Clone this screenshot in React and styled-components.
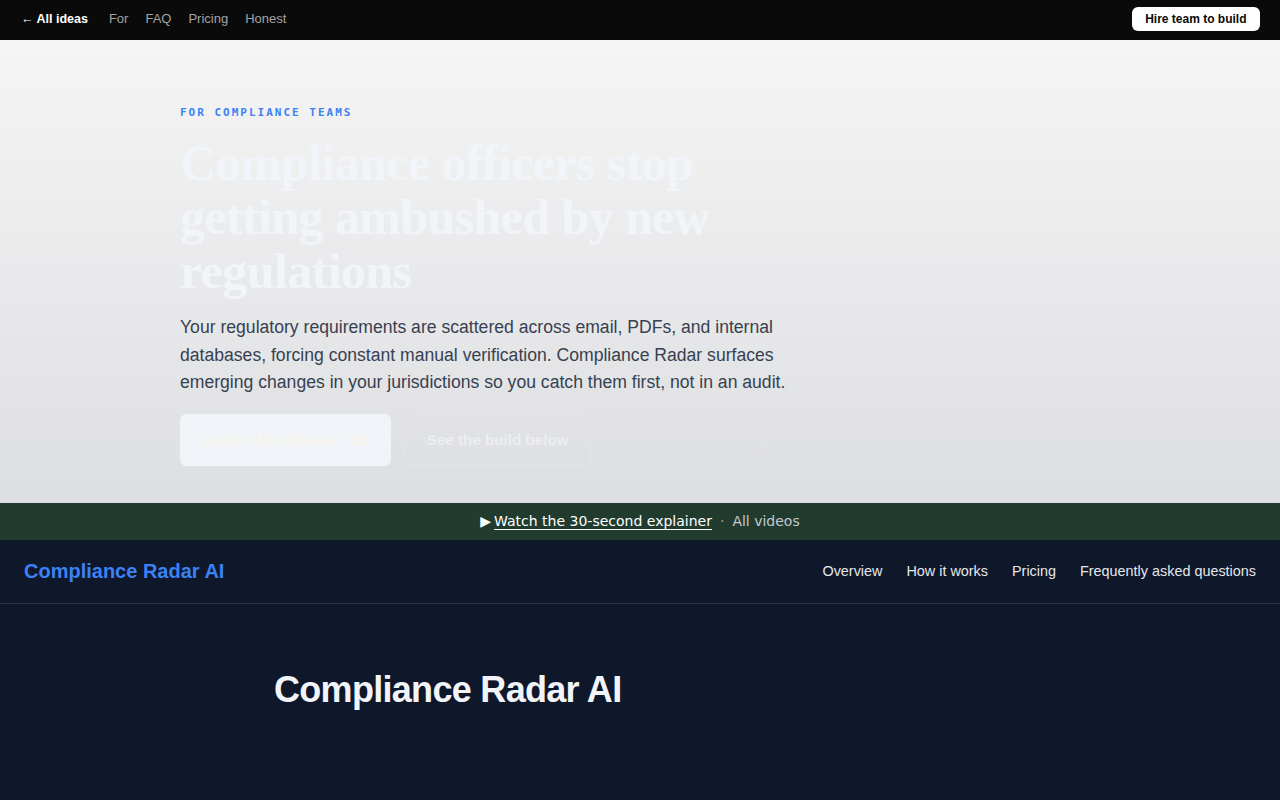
import React from "react";
import styled, { createGlobalStyle } from "styled-components";

const Global = createGlobalStyle`
  html, body { margin: 0; padding: 0; }
  body { font-family: "Liberation Sans", Arial, sans-serif; background: #0f172a; }
  * { box-sizing: border-box; }
`;

const TopBar = styled.header`
  height: 40px;
  background: #0a0a0a;
  display: flex;
  align-items: center;
  justify-content: space-between;
  padding: 0 20px 2px 21px;
`;

const TopLinks = styled.nav`
  display: flex;
  align-items: baseline;
  gap: 17px;
  margin-top: -2px;
`;

const TopLink = styled.a`
  font-size: ${(p) => (p.$strong ? "12.5px" : "13px")};
  color: ${(p) => (p.$strong ? "#ffffff" : "#a3a3a3")};
  font-weight: ${(p) => (p.$strong ? 700 : 400)};
  text-decoration: none;
  margin-right: ${(p) => (p.$strong ? "4px" : "0")};
`;

const HireButton = styled.a`
  background: #ffffff;
  color: #0a0a0a;
  font-size: 12px;
  font-weight: 700;
  border-radius: 6px;
  padding: 0 13.5px;
  height: 24px;
  display: flex;
  align-items: center;
  text-decoration: none;
`;

const Hero = styled.section`
  background: linear-gradient(180deg, #f5f5f5 0%, #dddee1 100%);
  padding: 66px 180px 37px;
`;

const Eyebrow = styled.div`
  font-family: "DejaVu Sans Mono", monospace;
  font-size: 11px;
  font-weight: 700;
  letter-spacing: 2px;
  color: #3b82f6;
  margin-bottom: 17px;
`;

const Headline = styled.h1`
  font-family: "Liberation Serif", "Times New Roman", serif;
  font-size: 50px;
  line-height: 54px;
  font-weight: 700;
  letter-spacing: -0.6px;
  color: #f1f5f9;
  margin: 0 0 16px;
  max-width: 560px;
`;

const Lede = styled.p`
  font-size: 17.6px;
  line-height: 27.5px;
  color: #374151;
  margin: 0 0 17px;
  max-width: 620px;
`;

const Actions = styled.div`
  display: flex;
  gap: 12px;
`;

const Btn = styled.a`
  height: 52px;
  padding: 0 ${(p) => (p.$primary ? "21.5px" : "22.5px")};
  display: flex;
  align-items: center;
  border-radius: 6px;
  font-size: 15.2px;
  font-weight: 700;
  text-decoration: none;
  background: ${(p) => (p.$primary ? "#f0f3f8" : "transparent")};
  color: ${(p) => (p.$primary ? "#f8f6ec" : "#eceef3")};
  border: 1px solid ${(p) => (p.$primary ? "#f0f3f8" : "#e3e4e7")};
`;

const Banner = styled.div`
  height: 37px;
  background: #213b2f;
  display: flex;
  align-items: center;
  justify-content: center;
  font-family: "DejaVu Sans", sans-serif;
  font-size: 14px;
  color: #d1d5db;
  gap: 8px;
`;

const Watch = styled.a`
  color: #ffffff;
  text-decoration: none;
  display: flex;
  align-items: center;
  gap: 3px;
`;

const Underlined = styled.span`
  text-decoration: underline;
  text-underline-offset: 3px;
`;

const Dot = styled.span`
  color: #9ca3af;
`;

const Muted = styled.a`
  color: #c4c8cf;
  text-decoration: none;
`;

const SiteNav = styled.nav`
  height: 64px;
  border-bottom: 1px solid #273244;
  display: flex;
  align-items: center;
  justify-content: space-between;
  padding: 0 24px;
  background: #0f172a;
`;

const Brand = styled.a`
  font-size: 20px;
  font-weight: 700;
  color: #3b82f6;
  text-decoration: none;
`;

const SiteLinks = styled.div`
  display: flex;
  gap: 24px;
`;

const SiteLink = styled.a`
  font-size: 14.4px;
  color: #e5e7eb;
  text-decoration: none;
`;

const Main = styled.main`
  background: #0f172a;
  min-height: 197px;
  padding: 65px 0 0;
`;

const Container = styled.div`
  max-width: 732px;
  margin: 0 auto;
`;

const Title = styled.h2`
  font-size: 36px;
  font-weight: 700;
  color: #f1f5f9;
  margin: 0;
  letter-spacing: -0.7px;
`;

export default function App() {
  return (
    <>
      <Global />
      <TopBar>
        <TopLinks>
          <TopLink href="#" $strong>← All ideas</TopLink>
          <TopLink href="#">For</TopLink>
          <TopLink href="#">FAQ</TopLink>
          <TopLink href="#">Pricing</TopLink>
          <TopLink href="#">Honest</TopLink>
        </TopLinks>
        <HireButton href="#">Hire team to build</HireButton>
      </TopBar>
      <Hero>
        <Eyebrow>FOR COMPLIANCE TEAMS</Eyebrow>
        <Headline>Compliance officers stop getting ambushed by new regulations</Headline>
        <Lede>
          Your regulatory requirements are scattered across email, PDFs, and internal databases, forcing constant manual verification. Compliance Radar surfaces emerging changes in your jurisdictions so you catch them first, not in an audit.
        </Lede>
        <Actions>
          <Btn href="#" $primary>Unlock the dossier · $5</Btn>
          <Btn href="#">See the build below</Btn>
        </Actions>
      </Hero>
      <Banner>
        <Watch href="#">▶ <Underlined>Watch the 30-second explainer</Underlined></Watch>
        <Dot>·</Dot>
        <Muted href="#">All videos</Muted>
      </Banner>
      <SiteNav>
        <Brand href="#">Compliance Radar AI</Brand>
        <SiteLinks>
          <SiteLink href="#">Overview</SiteLink>
          <SiteLink href="#">How it works</SiteLink>
          <SiteLink href="#">Pricing</SiteLink>
          <SiteLink href="#">Frequently asked questions</SiteLink>
        </SiteLinks>
      </SiteNav>
      <Main>
        <Container>
          <Title>Compliance Radar AI</Title>
        </Container>
      </Main>
    </>
  );
}
